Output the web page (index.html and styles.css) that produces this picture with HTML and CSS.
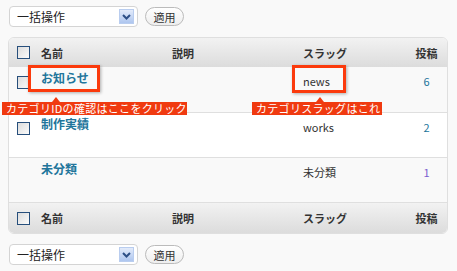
FILE: index.html
```html
<!DOCTYPE html>
<html lang="ja">
<head>
    <meta charset="UTF-8">
    <title>カテゴリー</title>
    <link rel="stylesheet" href="styles.css">
</head>
<body>
    <div class="tablenav">
        <div class="bulk-select">
            <span>一括操作</span>
            <span class="select-arrow">
                <svg width="9" height="6" viewBox="0 0 9 6"><path d="M1 1 L4.5 4.5 L8 1" fill="none" stroke="#2d4f86" stroke-width="2"/></svg>
            </span>
        </div>
        <button class="apply-btn">適用</button>
    </div>

    <div class="table-wrap">
        <table class="widefat">
            <thead>
                <tr>
                    <th class="col-check"><span class="checkbox"></span></th>
                    <th class="col-name">名前</th>
                    <th class="col-desc">説明</th>
                    <th class="col-slug">スラッグ</th>
                    <th class="col-posts">投稿</th>
                </tr>
            </thead>
            <tbody>
                <tr class="alt">
                    <td class="col-check"><span class="checkbox"></span></td>
                    <td class="col-name"><a class="row-title">お知らせ</a></td>
                    <td class="col-desc"></td>
                    <td class="col-slug">news</td>
                    <td class="col-posts"><a class="count">6</a></td>
                </tr>
                <tr>
                    <td class="col-check"><span class="checkbox"></span></td>
                    <td class="col-name"><a class="row-title">制作実績</a></td>
                    <td class="col-desc"></td>
                    <td class="col-slug">works</td>
                    <td class="col-posts"><a class="count">2</a></td>
                </tr>
                <tr class="alt">
                    <td class="col-check"></td>
                    <td class="col-name"><a class="row-title">未分類</a></td>
                    <td class="col-desc"></td>
                    <td class="col-slug">未分類</td>
                    <td class="col-posts"><a class="count visited">1</a></td>
                </tr>
            </tbody>
            <tfoot>
                <tr>
                    <th class="col-check"><span class="checkbox"></span></th>
                    <th class="col-name">名前</th>
                    <th class="col-desc">説明</th>
                    <th class="col-slug">スラッグ</th>
                    <th class="col-posts">投稿</th>
                </tr>
            </tfoot>
        </table>

        <!-- annotations -->
        <div class="mark mark-name"></div>
        <div class="note note-name">カテゴリIDの確認はここをクリック</div>
        <div class="mark mark-slug"></div>
        <div class="note note-slug">カテゴリスラッグはこれ</div>
    </div>

    <div class="tablenav bottom">
        <div class="bulk-select">
            <span>一括操作</span>
            <span class="select-arrow">
                <svg width="9" height="6" viewBox="0 0 9 6"><path d="M1 1 L4.5 4.5 L8 1" fill="none" stroke="#2d4f86" stroke-width="2"/></svg>
            </span>
        </div>
        <button class="apply-btn">適用</button>
    </div>
</body>
</html>
```

FILE: styles.css
```css
body {
    font-family: "Noto Sans CJK JP", "DejaVu Sans", sans-serif;
    font-size: 12px;
    line-height: 14px;
    margin: 0;
    padding: 6px 0 0 0;
    background-color: #f9f9f9;
    color: #333;
}
.tablenav {
    display: flex;
    align-items: center;
    gap: 7px;
    height: 21px;
    margin-left: 9px;
}
.tablenav.bottom {
    margin-top: 10px;
}
.bulk-select {
    box-sizing: border-box;
    width: 129px;
    height: 21px;
    display: flex;
    align-items: center;
    justify-content: space-between;
    padding: 0 3px 0 7px;
    background-color: white;
    border: 1px solid #d4d4d4;
    border-radius: 4px;
    font-size: 12px;
    color: #222;
}
.select-arrow {
    width: 15px;
    height: 15px;
    display: flex;
    align-items: center;
    justify-content: center;
    background: linear-gradient(#e3ebfa, #aec6ef);
    border: 1px solid #b9cdef;
    box-sizing: border-box;
}
.apply-btn {
    box-sizing: border-box;
    width: 39px;
    height: 19px;
    padding: 0;
    font-family: inherit;
    font-size: 11px;
    color: #333;
    background: linear-gradient(#ffffff, #eeeeee);
    border: 1px solid #bbb;
    border-radius: 10px;
}
.table-wrap {
    position: relative;
    margin: 10px 0 0 8px;
    width: 440px;
}
.widefat {
    width: 440px;
    border-collapse: separate;
    border-spacing: 0;
    border: 1px solid #dfdfdf;
    border-radius: 6px;
    background-color: white;
    table-layout: fixed;
}
.widefat th {
    height: 29px;
    background: linear-gradient(#f2f2f2, #dcdcdc);
    font-weight: bold;
    font-size: 11px;
    color: #333;
    text-align: left;
    padding: 0;
}
.widefat thead th:first-child { border-top-left-radius: 5px; }
.widefat thead th:last-child { border-top-right-radius: 5px; }
.widefat tfoot th {
    height: 30px;
    border-top: 1px solid #dfdfdf;
}
.widefat tfoot th:first-child { border-bottom-left-radius: 5px; }
.widefat tfoot th:last-child { border-bottom-right-radius: 5px; }
.widefat tbody tr {
    height: 45px;
}
.widefat td {
    vertical-align: top;
    padding: 0;
    border-top: 1px solid #dfdfdf;
    font-size: 11px;
}
.widefat tbody tr:first-child td {
    border-top: none;
}
.widefat tr.alt td {
    background-color: #f9f9f9;
}
.widefat .col-check { width: 24px; padding-left: 8px; }
.widefat .col-name { width: 131px; }
.widefat .col-desc { width: 131px; }
.widefat .col-slug { width: 103px; }
.widefat .col-posts { text-align: center; }
.widefat td.col-check .checkbox {
    margin-top: 9px;
}
.widefat td.col-name {
    padding-top: 4px;
}
.widefat td.col-slug, .widefat td.col-posts {
    padding-top: 7px;
}
.checkbox {
    display: block;
    box-sizing: border-box;
    width: 13px;
    height: 13px;
    border: 1px solid #274f7c;
    background: linear-gradient(135deg, #dcdcdc, #fbfbfb);
}
.row-title {
    display: inline-block;
    font-size: 12px;
    line-height: 12px;
    font-weight: bold;
    color: #21759b;
}
.count {
    color: #21759b;
}
.count.visited {
    color: #7b5fcf;
}
.mark {
    position: absolute;
    border: 3px solid #fb3a0c;
    box-shadow: 1px 1px 3px rgba(0, 0, 0, 0.3);
}
.mark-name {
    left: 20px;
    top: 28px;
    width: 66px;
    height: 21px;
}
.mark-slug {
    left: 284px;
    top: 28px;
    width: 48px;
    height: 22px;
}
.note {
    position: absolute;
    top: 65px;
    height: 13px;
    line-height: 13px;
    padding: 0 4px;
    background-color: #f03a10;
    color: white;
    font-size: 11px;
    letter-spacing: 0.3px;
    white-space: nowrap;
}
.note::before {
    content: "";
    position: absolute;
    top: -5px;
    border-left: 4px solid transparent;
    border-right: 4px solid transparent;
    border-bottom: 5px solid #f03a10;
}
.note-name {
    left: -6px;
    width: 177px;
}
.note-name::before { left: 50px; }
.note-slug {
    left: 244px;
    width: 122px;
}
.note-slug::before { left: 64px; }
```
